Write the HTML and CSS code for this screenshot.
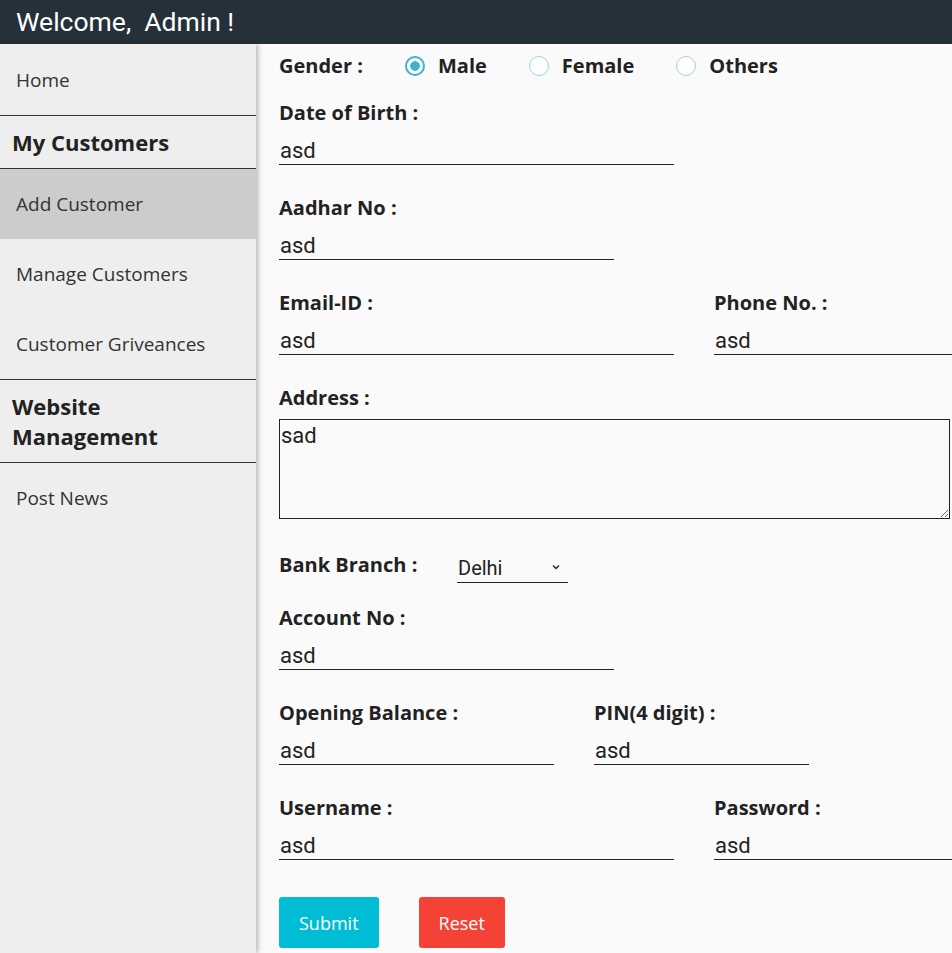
FILE: index.html
```html
<!DOCTYPE html>
<html>
<head>
<meta charset="utf-8">
<link rel="stylesheet" href="styles.css">
</head>
<body>
<header class="topbar">Welcome,&nbsp; Admin !</header>
<div class="layout">
  <nav class="sidebar">
    <a class="nav-item">Home</a>
    <div class="nav-heading">My Customers</div>
    <a class="nav-item active">Add Customer</a>
    <a class="nav-item">Manage Customers</a>
    <a class="nav-item">Customer Griveances</a>
    <div class="nav-heading">Website<br>Management</div>
    <a class="nav-item">Post News</a>
  </nav>
  <main class="main">
    <div class="gender-row">
      <span class="label gender-label">Gender :</span>
      <label class="radio-opt"><input type="radio" name="g" checked><span class="label">Male</span></label>
      <label class="radio-opt"><input type="radio" name="g"><span class="label">Female</span></label>
      <label class="radio-opt"><input type="radio" name="g"><span class="label">Others</span></label>
    </div>

    <div class="group first">
      <div class="label">Date of Birth :</div>
      <input class="text w395" value="asd">
    </div>

    <div class="group">
      <div class="label">Aadhar No :</div>
      <input class="text w335" value="asd">
    </div>

    <div class="group row">
      <div class="col">
        <div class="label">Email-ID :</div>
        <input class="text w395" value="asd">
      </div>
      <div class="col">
        <div class="label">Phone No. :</div>
        <input class="text w395" value="asd">
      </div>
    </div>

    <div class="group">
      <div class="label">Address :</div>
      <textarea class="area">sad</textarea>
    </div>

    <div class="bank-row">
      <span class="label bank-label">Bank Branch :</span>
      <span class="select-wrap">
        <select class="select"><option>Delhi</option></select>
        <svg class="chev" width="8" height="6" viewBox="0 0 8 6"><path d="M1 1.5 L4 4.5 L7 1.5" fill="none" stroke="#222" stroke-width="1.4"/></svg>
      </span>
    </div>

    <div class="group after-bank">
      <div class="label">Account No :</div>
      <input class="text w335" value="asd">
    </div>

    <div class="group row">
      <div class="col">
        <div class="label">Opening Balance :</div>
        <input class="text w275" value="asd">
      </div>
      <div class="col">
        <div class="label">PIN(4 digit) :</div>
        <input class="text w215" value="asd">
      </div>
    </div>

    <div class="group row">
      <div class="col">
        <div class="label">Username :</div>
        <input class="text w395" value="asd">
      </div>
      <div class="col">
        <div class="label">Password :</div>
        <input class="text w395" value="asd">
      </div>
    </div>

    <div class="buttons">
      <button class="btn submit">Submit</button>
      <button class="btn reset">Reset</button>
    </div>
  </main>
</div>
</body>
</html>
```

FILE: styles.css
```css
html, body {
  margin: 0;
  padding: 0;
}
body {
  background: #fafafa;
  font-family: "Open Sans", "Noto Sans", sans-serif;
  color: #222;
}
.topbar {
  height: 44px;
  line-height: 44px;
  background: #263038;
  color: #fff;
  font-family: Roboto, sans-serif;
  font-size: 26.5px;
  padding-left: 16px;
  white-space: nowrap;
}
.layout {
  display: flex;
  min-height: calc(100vh - 44px);
}
.sidebar {
  width: 256px;
  flex: 0 0 256px;
  padding-top: 1px;
  background: #eeeeee;
  box-shadow: 2px 0 5px rgba(0,0,0,0.28);
  position: relative;
  z-index: 1;
}
.nav-item {
  display: block;
  height: 70px;
  line-height: 70px;
  padding-left: 16px;
  font-size: 19px;
  color: #333;
  white-space: nowrap;
}
.nav-item.active {
  background: #cccccc;
}
.nav-heading {
  border-top: 1px solid #333;
  border-bottom: 1px solid #333;
  padding: 11px 12px;
  line-height: 30px;
  font-size: 22px;
  font-weight: 700;
  color: #222;
}
.main {
  flex: 1;
  min-width: 0;
  overflow: hidden;
  padding: 10px 0 0 23px;
}
.label {
  font-size: 20px;
  font-weight: 700;
  line-height: 24px;
  color: #222;
  white-space: nowrap;
}
.gender-row {
  display: flex;
  align-items: center;
  height: 24px;
}
.gender-label {
  width: 126px;
}
.radio-opt {
  display: flex;
  align-items: center;
  margin-right: 42px;
}
.radio-opt input {
  appearance: none;
  -webkit-appearance: none;
  width: 20px;
  height: 20px;
  margin: 0 13px 0 0;
  border-radius: 50%;
  border: 1.5px solid #9ad5e2;
  background: #fff;
  box-sizing: border-box;
}
.radio-opt input:checked {
  border: 2px solid #38b4cf;
  background: radial-gradient(circle, #38b4cf 0 4.5px, #fff 5px);
}
.group {
  margin-top: 31px;
}
.group.first {
  margin-top: 23px;
}
.group.after-bank {
  margin-top: 23px;
}
.row {
  display: flex;
  gap: 40px;
}
.col {
  flex: 0 0 auto;
}
.text {
  display: block;
  box-sizing: border-box;
  margin: 11px 0 0 0;
  padding: 0 1px;
  height: 29px;
  line-height: 28px;
  border: none;
  border-bottom: 1px solid #222;
  background: transparent;
  font-family: Roboto, sans-serif;
  font-size: 22px;
  color: #222;
  outline: none;
}
.w395 { width: 395px; }
.w335 { width: 335px; }
.w275 { width: 275px; }
.w215 { width: 215px; }
.area {
  display: block;
  box-sizing: border-box;
  margin-top: 9px;
  width: 671px;
  height: 100px;
  border: 1px solid #222;
  background: #fafafa;
  padding: 3px 1px;
  font-family: Roboto, sans-serif;
  font-size: 22px;
  color: #222;
}
.bank-row {
  display: flex;
  align-items: flex-start;
  margin-top: 34px;
}
.bank-label {
  width: 178px;
}
.select-wrap {
  position: relative;
  display: inline-block;
}
.select {
  appearance: none;
  -webkit-appearance: none;
  box-sizing: border-box;
  width: 111px;
  height: 30px;
  border: none;
  border-bottom: 1px solid #222;
  border-radius: 0;
  background: transparent;
  padding: 0 1px;
  font-family: Roboto, sans-serif;
  font-size: 20px;
  color: #222;
}
.chev {
  position: absolute;
  right: 8px;
  top: 11px;
}
.buttons {
  display: flex;
  gap: 40px;
  margin-top: 37px;
}
.btn {
  height: 51px;
  padding: 0 20px;
  border: none;
  border-radius: 3px;
  font-family: "Open Sans", sans-serif;
  font-size: 18px;
  color: #fff;
}
.submit { background: #00bcd4; }
.reset { background: #f44336; }
```
